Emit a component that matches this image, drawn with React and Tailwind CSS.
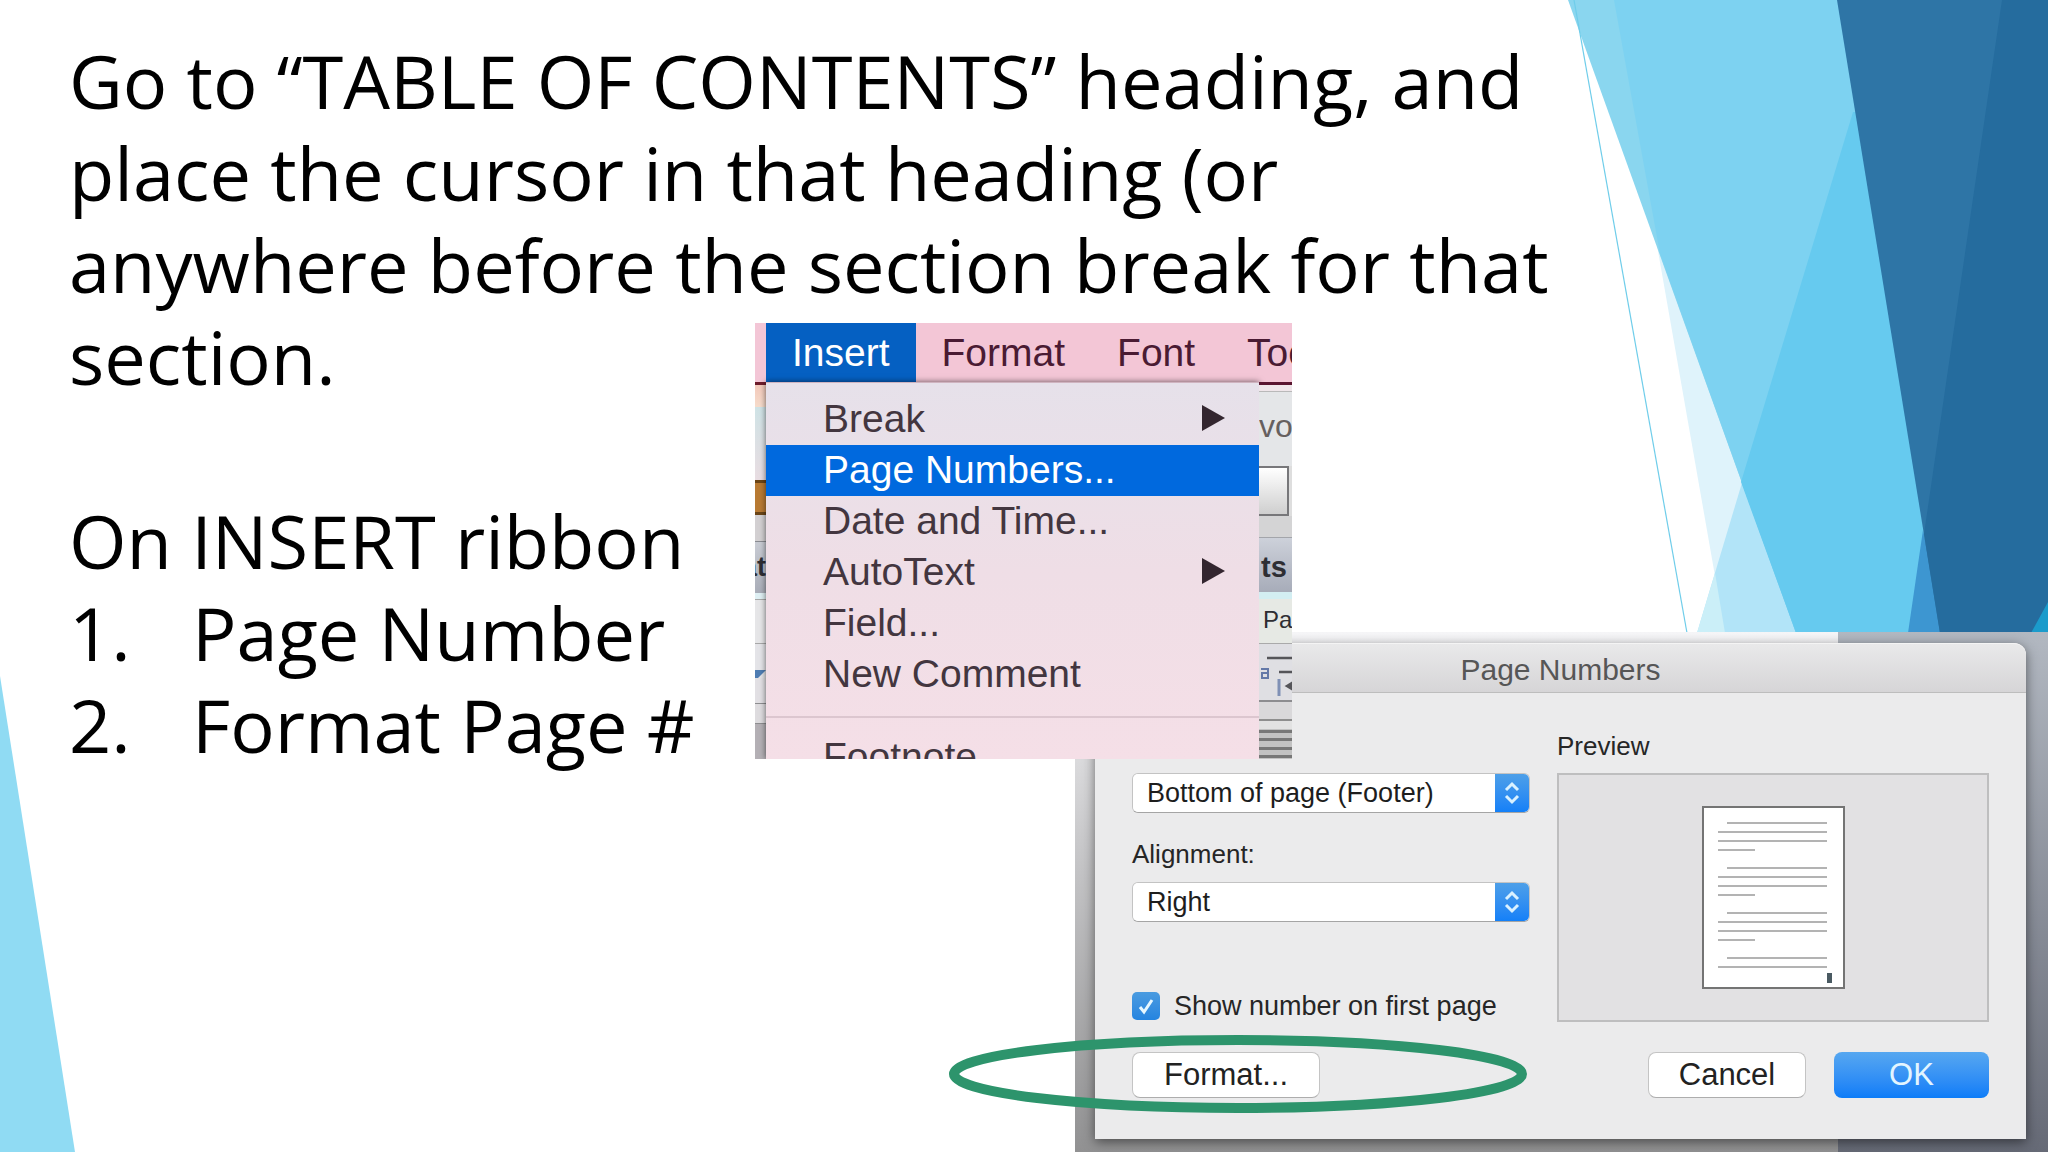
import React from "react";

function Facets() {
  return (
    <svg
      className="absolute inset-0 h-full w-full"
      viewBox="0 0 2048 1152"
      preserveAspectRatio="none"
      aria-hidden="true"
    >
      <polygon points="1614,0 2048,0 2048,1152 1816,1152" fill="#dff3fb" />
      <polygon points="1697,633 1853,112 2048,112 2048,633" fill="#b2e4f8" />
      <polygon points="1697,633 1715,573 1725,633" fill="#cbeff8" />
      <polygon points="1568,0 2048,0 2048,633 1796,633" fill="#8ad6ef" />
      <polygon points="1614,0 2048,0 2048,633 1796,633 1660,254" fill="#7dd2f1" />
      <polygon points="1741,482 1853,112 2048,112 2048,633 1796,633" fill="#66caef" />
      <polygon points="1923,530 1908,633 1945,633" fill="#3d96d1" />
      <polygon points="1837,0 2048,0 2048,633 1940,633" fill="#2e75a6" />
      <polygon points="2002,0 2048,0 2048,633 1940,633 1924,534" fill="#256c9e" />
      <polygon points="2048,602 2048,633 2031,633" fill="#1b9bcb" />
      <line x1="1574" y1="0" x2="1687" y2="633" stroke="#6fcdea" strokeWidth="1.2" />
      <polygon points="0,676 75,1152 0,1152" fill="#90dbf3" />
    </svg>
  );
}

const menuItems = [
  { label: "Break", sub: true },
  { label: "Page Numbers...", active: true },
  { label: "Date and Time..." },
  { label: "AutoText", sub: true },
  { label: "Field..." },
  { label: "New Comment" },
];

function MenuItem({ label, sub, active }) {
  return (
    <button
      className={
        active
          ? "flex h-[51px] w-full shrink-0 items-center justify-between bg-[#0069de] pr-[34px] pb-[3px] pl-[57px] text-white"
          : "flex h-[51px] w-full shrink-0 items-center justify-between pr-[34px] pb-[3px] pl-[57px] text-[#43363f]"
      }
    >
      <span>{label}</span>
      {sub && (
        <svg className="h-[26px] w-[23px]" viewBox="0 0 23 26" aria-hidden="true">
          <path d="M0 0 L23 13 L0 26 Z" fill="#33262f" />
        </svg>
      )}
    </button>
  );
}

function InsertMenu() {
  return (
    <div className="absolute top-[323px] left-[755px] z-10 flex h-[436px] w-[537px] flex-col overflow-hidden bg-[#f3dfe8] text-[39px] leading-none">
      <div className="flex h-[59px] shrink-0 bg-[#f3c6d6] pl-[11px] text-[#4a1b33]">
        <button className="bg-[#0560c2] px-[26px] text-white">Insert</button>
        <button className="px-[26px]">Format</button>
        <button className="px-[26px]">Font</button>
        <button className="px-[26px]">Tools</button>
      </div>
      <div className="flex min-h-0 flex-1">
        <div className="flex w-[11px] shrink-0 flex-col overflow-hidden bg-[#dedbdd]">
          <div className="h-[3px] shrink-0 bg-[#6d1c2c]" />
          <div className="h-[22px] shrink-0 bg-linear-to-b from-[#f3c9bb] to-[#f6dccb]" />
          <div className="h-[73px] shrink-0 bg-linear-to-b from-[#cfe3e6] to-[#e9dde2]" />
          <div className="h-[35px] shrink-0 border-y-[3px] border-[#6b4517] bg-[#b87a33]" />
          <div className="h-[26px] shrink-0 bg-[#d3d0d2]" />
          <div className="flex h-[52px] shrink-0 items-center justify-end border-t border-[#8a8c92] bg-linear-to-b from-[#c9ccd4] to-[#a9adb8] text-[27px] font-bold text-[#2e2e33]">
            at
          </div>
          <div className="h-[6px] shrink-0 bg-[#dff0f4]" />
          <div className="h-[45px] shrink-0 border-y border-[#a8a8a8] bg-[#e6e6e8]" />
          <div className="h-[26px] shrink-0 bg-[#e4e4e8]" />
          <svg className="h-[8px] w-[11px] shrink-0 bg-[#e4e4e8]" viewBox="0 0 11 8" aria-hidden="true">
            <path d="M0 0h11L3 8H0z" fill="#4f7db3" />
          </svg>
          <div className="h-[26px] shrink-0 border-b border-[#8e8e90] bg-[#e2e0e4]" />
          <div className="h-[20px] shrink-0 border-b border-[#8e8e90] bg-[#dedcdf]" />
          <div className="flex-1 bg-[#b4b0b5]" />
        </div>

        <div className="flex min-w-0 flex-1 flex-col overflow-hidden border-t border-[#cfb4c0] bg-linear-to-b from-[#e6e1ea] via-[#efdee6] to-[#f5dfe7] pt-[11px] shadow-[0_0_6px_rgba(0,0,0,0.6)]">
          {menuItems.map((item) => (
            <MenuItem key={item.label} {...item} />
          ))}
          <div className="mt-[16px] h-[2px] shrink-0 bg-[#dcc6cf]" />
          <button className="mt-[14px] flex h-[51px] shrink-0 items-center pb-[3px] pl-[57px] text-[#43363f]">
            Footnote...
          </button>
        </div>

        <div className="flex w-[33px] shrink-0 flex-col overflow-hidden bg-[#dedede] text-[#2e2e33]">
          <div className="h-[3px] shrink-0 bg-[#5a1530]" />
          <div className="h-[7px] shrink-0 border-b border-[#b9b9b9] bg-[#efe6ea]" />
          <div className="flex h-[74px] shrink-0 items-center bg-[#e4e6e8] pb-[6px] text-[32px] text-[#66605f]">
            vo
          </div>
          <div className="mr-[3px] h-[50px] shrink-0 border-2 border-l-0 border-[#77777a] bg-linear-to-b from-white to-[#cfcfcf]" />
          <div className="h-[22px] shrink-0 border-b border-[#a3a5aa] bg-[#d4d4d5]" />
          <div className="flex h-[54px] shrink-0 items-center bg-linear-to-b from-[#cdd1da] to-[#a7acb9] pt-[4px] pl-[2px] text-[29px] font-bold">
            ts
          </div>
          <div className="h-[7px] shrink-0 bg-[#d3eef2]" />
          <div className="flex h-[45px] shrink-0 items-center border-b border-[#aaaaaa] bg-[#e6e9e4] pb-[2px] pl-[4px] text-[24px]">
            Pa
          </div>
          <svg className="h-[58px] w-[33px] shrink-0" viewBox="0 0 33 58" aria-hidden="true">
            <rect width="33" height="58" fill="#dfdfe3" />
            <path d="M8 14h25M20 28h13M28 42l5-3v6z" stroke="#555559" strokeWidth="2.5" fill="#555559" />
            <path d="M2 25h7v9h-6v-5h6" stroke="#6479a8" strokeWidth="2" fill="none" />
            <path d="M20 35v17" stroke="#7f90b5" strokeWidth="3" />
            <path d="M0 57h33" stroke="#8d8d90" strokeWidth="2" />
          </svg>
          <div className="h-[19px] shrink-0 border-b-2 border-[#8e8e8e] bg-[#d9d8da]" />
          <div className="h-[8px] shrink-0 bg-[#e2e2e2]" />
          <div className="flex flex-1 flex-col justify-between bg-[#c2c2c2] py-px">
            <div className="h-[3px] bg-[#777777]" />
            <div className="h-[3px] bg-[#777777]" />
            <div className="h-[3px] bg-[#777777]" />
            <div className="h-[3px] bg-[#777777]" />
          </div>
        </div>
      </div>
    </div>
  );
}

function Picker({ id, value, ...rest }) {
  return (
    <div className="relative flex h-[40px] overflow-hidden rounded-md border border-[#c3c3c3] border-b-[#a5a5a5] bg-white">
      <select
        id={id}
        defaultValue={value}
        className="h-full w-full appearance-none bg-white pl-[14px] text-[27px] leading-[36px] text-[#1d1d1d]"
        {...rest}
      >
        <option>{value}</option>
      </select>
      <div className="pointer-events-none absolute inset-y-0 right-0 flex w-[34px] items-center justify-center bg-linear-to-b from-[#4d9fe8] to-[#1380f8]">
        <svg className="h-[24px] w-[16px]" viewBox="0 0 16 24" fill="none" aria-hidden="true">
          <path d="M2 9l6-6 6 6M2 15l6 6 6-6" stroke="#d9f1ff" strokeWidth="3" />
        </svg>
      </div>
    </div>
  );
}

function PagePreview() {
  const rows = [0, 1, 2, 3, 5, 6, 7, 8, 10, 11, 12, 13, 15, 16];
  return (
    <svg className="h-[183px] w-[143px]" viewBox="0 0 143 183" role="img" aria-label="Page preview">
      <rect x="1" y="1" width="141" height="181" fill="#ffffff" stroke="#747474" strokeWidth="2" />
      {rows.map((r) => (
        <line
          key={r}
          x1={r % 5 === 0 ? 25 : 16}
          x2={r % 5 === 3 ? 53 : 125}
          y1={17 + r * 9}
          y2={17 + r * 9}
          stroke="#b3b3b3"
          strokeWidth="2"
        />
      ))}
      <rect x="125" y="167" width="5" height="10" fill="#4a5a62" />
    </svg>
  );
}

function PageNumbersDialog() {
  return (
    <div className="absolute right-0 bottom-0 w-[973px] bg-linear-to-b from-[#b2b8c1] to-[#666a76]">
      <div className="w-[763px] bg-linear-to-b from-[#f6f6f8] via-[#c9c9cb] via-40% to-[#919192] pt-[11px] pb-[13px]">
        <section
          aria-label="Page Numbers"
          className="ml-[20px] w-[931px] rounded-tr-xl bg-[#ebebec] pb-[41px] shadow-[0_3px_12px_rgba(0,0,0,0.5)]"
        >
          <h2 className="flex h-[50px] items-center justify-center rounded-tr-xl border-t border-b border-t-[#f4f4f4] border-b-[#bdbdbd] bg-linear-to-b from-[#e9e9ea] to-[#d6d5d7] pt-[4px] text-[30px] leading-none text-[#565656]">
            Page Numbers
          </h2>
          <div className="grid grid-cols-[398fr_432fr] gap-x-[27px] px-[37px] pt-[38px] text-[26px] leading-[30px] text-[#262626]">
            <div className="flex flex-col pt-[42px]">
              <Picker value="Bottom of page (Footer)" aria-label="Position" />
              <label htmlFor="alignment" className="mt-[26px] mb-[13px]">
                Alignment:
              </label>
              <Picker id="alignment" value="Right" />
              <label className="mt-[69px] flex items-center gap-[14px] text-[27px]">
                <span className="relative flex h-[28px] w-[28px]">
                  <input
                    type="checkbox"
                    defaultChecked
                    className="h-[28px] w-[28px] appearance-none rounded-[5px] bg-linear-to-b from-[#4a9be0] to-[#2484e0]"
                  />
                  <svg className="pointer-events-none absolute inset-0" viewBox="0 0 28 28" fill="none" aria-hidden="true">
                    <path d="M8 15l4 5 8-12" stroke="#e6f7ff" strokeWidth="3" />
                  </svg>
                </span>
                Show number on first page
              </label>
            </div>
            <div className="flex flex-col">
              <h3>Preview</h3>
              <div className="mt-[12px] flex h-[249px] items-center justify-center border-2 border-[#bebebf] bg-[#e2e1e3]">
                <PagePreview />
              </div>
            </div>
          </div>
          <div className="mt-[30px] flex px-[37px] text-[31px] leading-none text-[#222222]">
            <button className="mr-auto h-[46px] w-[188px] rounded-lg border border-[#c4c4c4] border-b-[#adadad] bg-white pb-[2px]">
              Format...
            </button>
            <button className="mr-[28px] h-[46px] w-[158px] rounded-lg border border-[#c4c4c4] border-b-[#adadad] bg-white pb-[2px]">
              Cancel
            </button>
            <button className="h-[46px] w-[155px] rounded-lg bg-linear-to-b from-[#56a7f0] to-[#0a7cf8] pb-[2px] text-[#e3f5ff]">
              OK
            </button>
          </div>
        </section>
      </div>
      <svg
        className="pointer-events-none absolute bottom-[38px] left-[-127px] h-[81px] w-[580px]"
        viewBox="0 0 580 81"
        aria-hidden="true"
      >
        <ellipse cx="290" cy="41" rx="284" ry="34" fill="none" stroke="#2d946c" strokeWidth="10" />
      </svg>
    </div>
  );
}

export default function App() {
  return (
    <main className="relative min-h-screen w-full overflow-hidden bg-white font-['Liberation_Sans',Arial,sans-serif]">
      <Facets />
      <div className="relative pt-[35px] pl-[69px] font-['Open_Sans','Noto_Sans',sans-serif] text-[74px] leading-[92px] font-medium text-black">
        <p>
          Go to “TABLE OF CONTENTS” heading, and
          <br />
          place the cursor in that heading (or
          <br />
          anywhere before the section break for that
          <br />
          section.
        </p>
        <p className="mt-[92px]">On INSERT ribbon</p>
        <ol>
          <li className="flex">
            <span className="w-[123px]">1.</span>Page Number
          </li>
          <li className="flex">
            <span className="w-[123px]">2.</span>Format Page #
          </li>
        </ol>
      </div>
      <InsertMenu />
      <PageNumbersDialog />
    </main>
  );
}
